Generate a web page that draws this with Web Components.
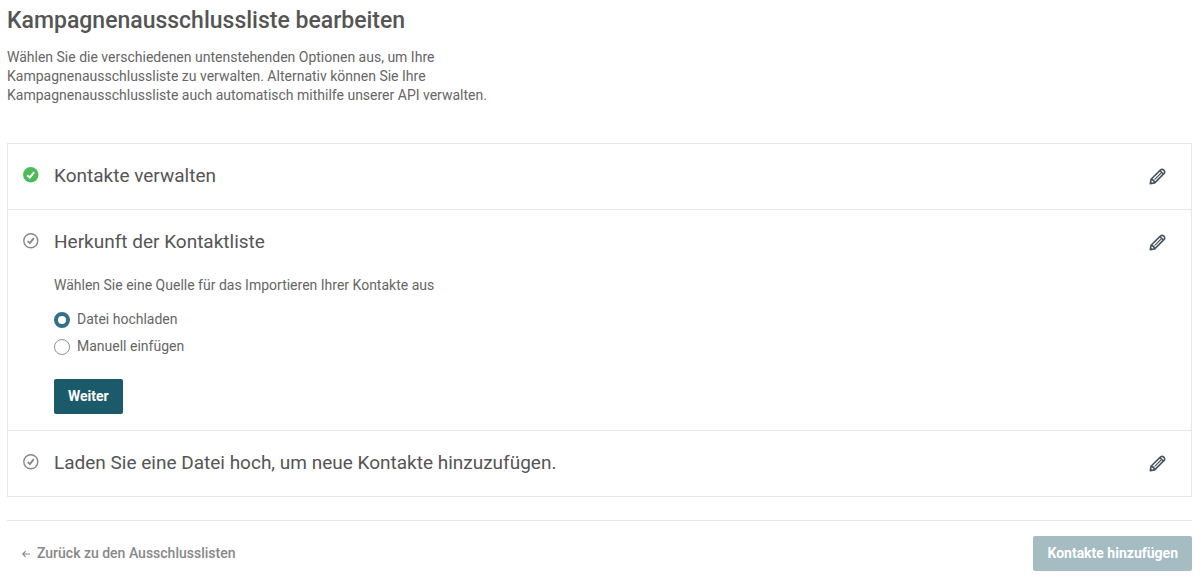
<!DOCTYPE html>
<html lang="de">
<head>
<meta charset="utf-8">
<meta name="viewport" content="width=device-width, initial-scale=1">
<title>Kampagnenausschlussliste bearbeiten</title>
<style>
  body {
    margin: 0;
    background: #fff;
    color: #666;
    font: 14px/19px Roboto, "Liberation Sans", sans-serif;
    --heading: #555;
    --line: #e8e8e8;
    --primary: #1a5a6a;
    --accent: #357184;
    --muted: #888;
  }
</style>
</head>
<body>
<exclusion-page></exclusion-page>

<template id="page-template">
  <style>
    :host { display: block; padding: 7px 8px 8px 7px; }
    h1 { margin: 0; color: var(--heading); font-size: 23px; line-height: 28px; font-weight: 500; }
    .intro { margin: 13px 0 38px; max-width: 500px; }
    .steps { border: 1px solid var(--line); }
    footer {
      display: flex; align-items: center; justify-content: space-between;
      margin-top: 23px; padding: 15px 0 0 15px; border-top: 1px solid var(--line);
    }
  </style>
  <header>
    <h1>Kampagnenausschlussliste bearbeiten</h1>
    <p class="intro">Wählen Sie die verschiedenen untenstehenden Optionen aus, um Ihre Kampagnenausschlussliste zu verwalten. Alternativ können Sie Ihre Kampagnenausschlussliste auch automatisch mithilfe unserer API verwalten.</p>
  </header>
  <main class="steps">
    <wizard-step done><span slot="title">Kontakte verwalten</span></wizard-step>
    <wizard-step open>
      <span slot="title">Herkunft der Kontaktliste</span>
      <source-choice></source-choice>
    </wizard-step>
    <wizard-step><span slot="title">Laden Sie eine Datei hoch, um neue Kontakte hinzuzufügen.</span></wizard-step>
  </main>
  <footer>
    <back-link>Zurück zu den Ausschlusslisten</back-link>
    <action-button disabled>Kontakte hinzufügen</action-button>
  </footer>
</template>

<template id="step-template">
  <style>
    :host { display: block; }
    :host(:not(:first-child)) { border-top: 1px solid var(--line); }
    .head { display: flex; align-items: center; min-height: 65px; padding: 0 25px 0 15px; box-sizing: border-box; }
    .status { flex: none; width: 16px; height: 16px; margin: 0 15px 3px 0; color: var(--muted); }
    :host([done]) .outline, :host(:not([done])) .solid { display: none; }
    h2 { flex: 1; margin: 0; padding-bottom: 2px; color: var(--heading); font-size: 19px; line-height: 24px; font-weight: 400; }
    button { flex: none; display: block; padding: 0; border: 0; background: none; color: #465660; cursor: pointer; }
    button svg { display: block; }
    .body { padding: 1px 46px 16px; }
    :host(:not([open])) .body { display: none; }
  </style>
  <div class="head">
    <svg class="status solid" viewBox="0 0 16 16" aria-hidden="true">
      <circle cx="7.8" cy="7.8" r="7.7" fill="#4cbb5c"/>
      <path d="M4.3 8.3 L6.8 10.6 L11.2 5.1" fill="none" stroke="#fff" stroke-width="2"/>
    </svg>
    <svg class="status outline" viewBox="0 0 16 16" aria-hidden="true">
      <circle cx="7.8" cy="7.8" r="7" fill="none" stroke="currentColor" stroke-width="1.4"/>
      <path d="M4.7 8.1 L6.9 10.2 L10.8 5.2" fill="none" stroke="currentColor" stroke-width="1.9"/>
    </svg>
    <h2><slot name="title"></slot></h2>
    <button type="button" aria-label="Bearbeiten">
      <svg width="17" height="17" viewBox="0 0 17 17" fill="none" stroke="currentColor" stroke-width="1.6" stroke-linejoin="round" aria-hidden="true">
        <path d="M1.3 15.7 L2 11.3 L11.6 1.9 Q13.2 .6 14.8 2.1 Q16.4 3.7 15.1 5.4 L5.7 14.9 Z"/>
        <path d="M2.1 11.4 Q5 11.8 5.6 14.8 M11 2.7 L14.3 6"/>
        <path d="M5.5 11.6 L12.1 5" stroke-width="1.1"/>
        <path d="M1.2 15.8 L1.7 13.4 L3.7 15.3 Z" fill="currentColor" stroke="none"/>
      </svg>
    </button>
  </div>
  <div class="body"><slot></slot></div>
</template>

<template id="choice-template">
  <style>
    :host { display: block; }
    p { margin: 0 0 15px; }
    fieldset { min-width: 0; margin: 0 0 23px; padding: 0; border: 0; display: grid; gap: 8px; justify-items: start; }
    label { display: flex; align-items: center; cursor: pointer; }
    input {
      appearance: none; flex: none; width: 16px; height: 16px; margin: 0 7px 0 0; box-sizing: border-box;
      border: 1px solid #8a939c; border-radius: 50%; background: #fff;
    }
    input:checked { border: 4px solid var(--accent); }
  </style>
  <p id="question">Wählen Sie eine Quelle für das Importieren Ihrer Kontakte aus</p>
  <fieldset aria-labelledby="question">
    <label><input type="radio" name="source" value="file" checked>Datei hochladen</label>
    <label><input type="radio" name="source" value="manual">Manuell einfügen</label>
  </fieldset>
  <action-button>Weiter</action-button>
</template>

<template id="button-template">
  <style>
    :host { display: block; width: fit-content; }
    button {
      display: block; padding: 8px 14px; border: 0; border-radius: 2px;
      background: var(--primary); color: #fff; font: inherit; font-weight: 700; cursor: pointer;
    }
    button:disabled { background: #a4bcc2; cursor: default; }
  </style>
  <button type="button"><slot></slot></button>
</template>

<template id="back-template">
  <style>
    :host { display: block; }
    a { display: flex; align-items: center; gap: 7px; color: var(--muted); font-weight: 500; text-decoration: none; }
  </style>
  <a href="#">
    <svg width="8" height="8" viewBox="0 0 8 8" fill="none" stroke="currentColor" stroke-width="1.2" aria-hidden="true"><path d="M8 4 H1 M3.6 1.2 L.8 4 L3.6 6.8"/></svg>
    <span><slot></slot></span>
  </a>
</template>

<script>
  class TemplateElement extends HTMLElement {
    constructor() {
      super();
      const template = document.getElementById(this.constructor.template);
      this.attachShadow({ mode: "open" }).append(template.content.cloneNode(true));
    }
  }

  class ActionButton extends TemplateElement {
    static template = "button-template";
    static observedAttributes = ["disabled"];
    attributeChangedCallback() {
      this.shadowRoot.querySelector("button").disabled = this.hasAttribute("disabled");
    }
  }

  class WizardStep extends TemplateElement {
    static template = "step-template";
    connectedCallback() {
      this.shadowRoot.querySelector("button").onclick = () => this.toggleAttribute("open");
    }
  }

  class SourceChoice extends TemplateElement { static template = "choice-template"; }
  class BackLink extends TemplateElement { static template = "back-template"; }
  class ExclusionPage extends TemplateElement { static template = "page-template"; }

  customElements.define("action-button", ActionButton);
  customElements.define("wizard-step", WizardStep);
  customElements.define("source-choice", SourceChoice);
  customElements.define("back-link", BackLink);
  customElements.define("exclusion-page", ExclusionPage);
</script>
</body>
</html>
